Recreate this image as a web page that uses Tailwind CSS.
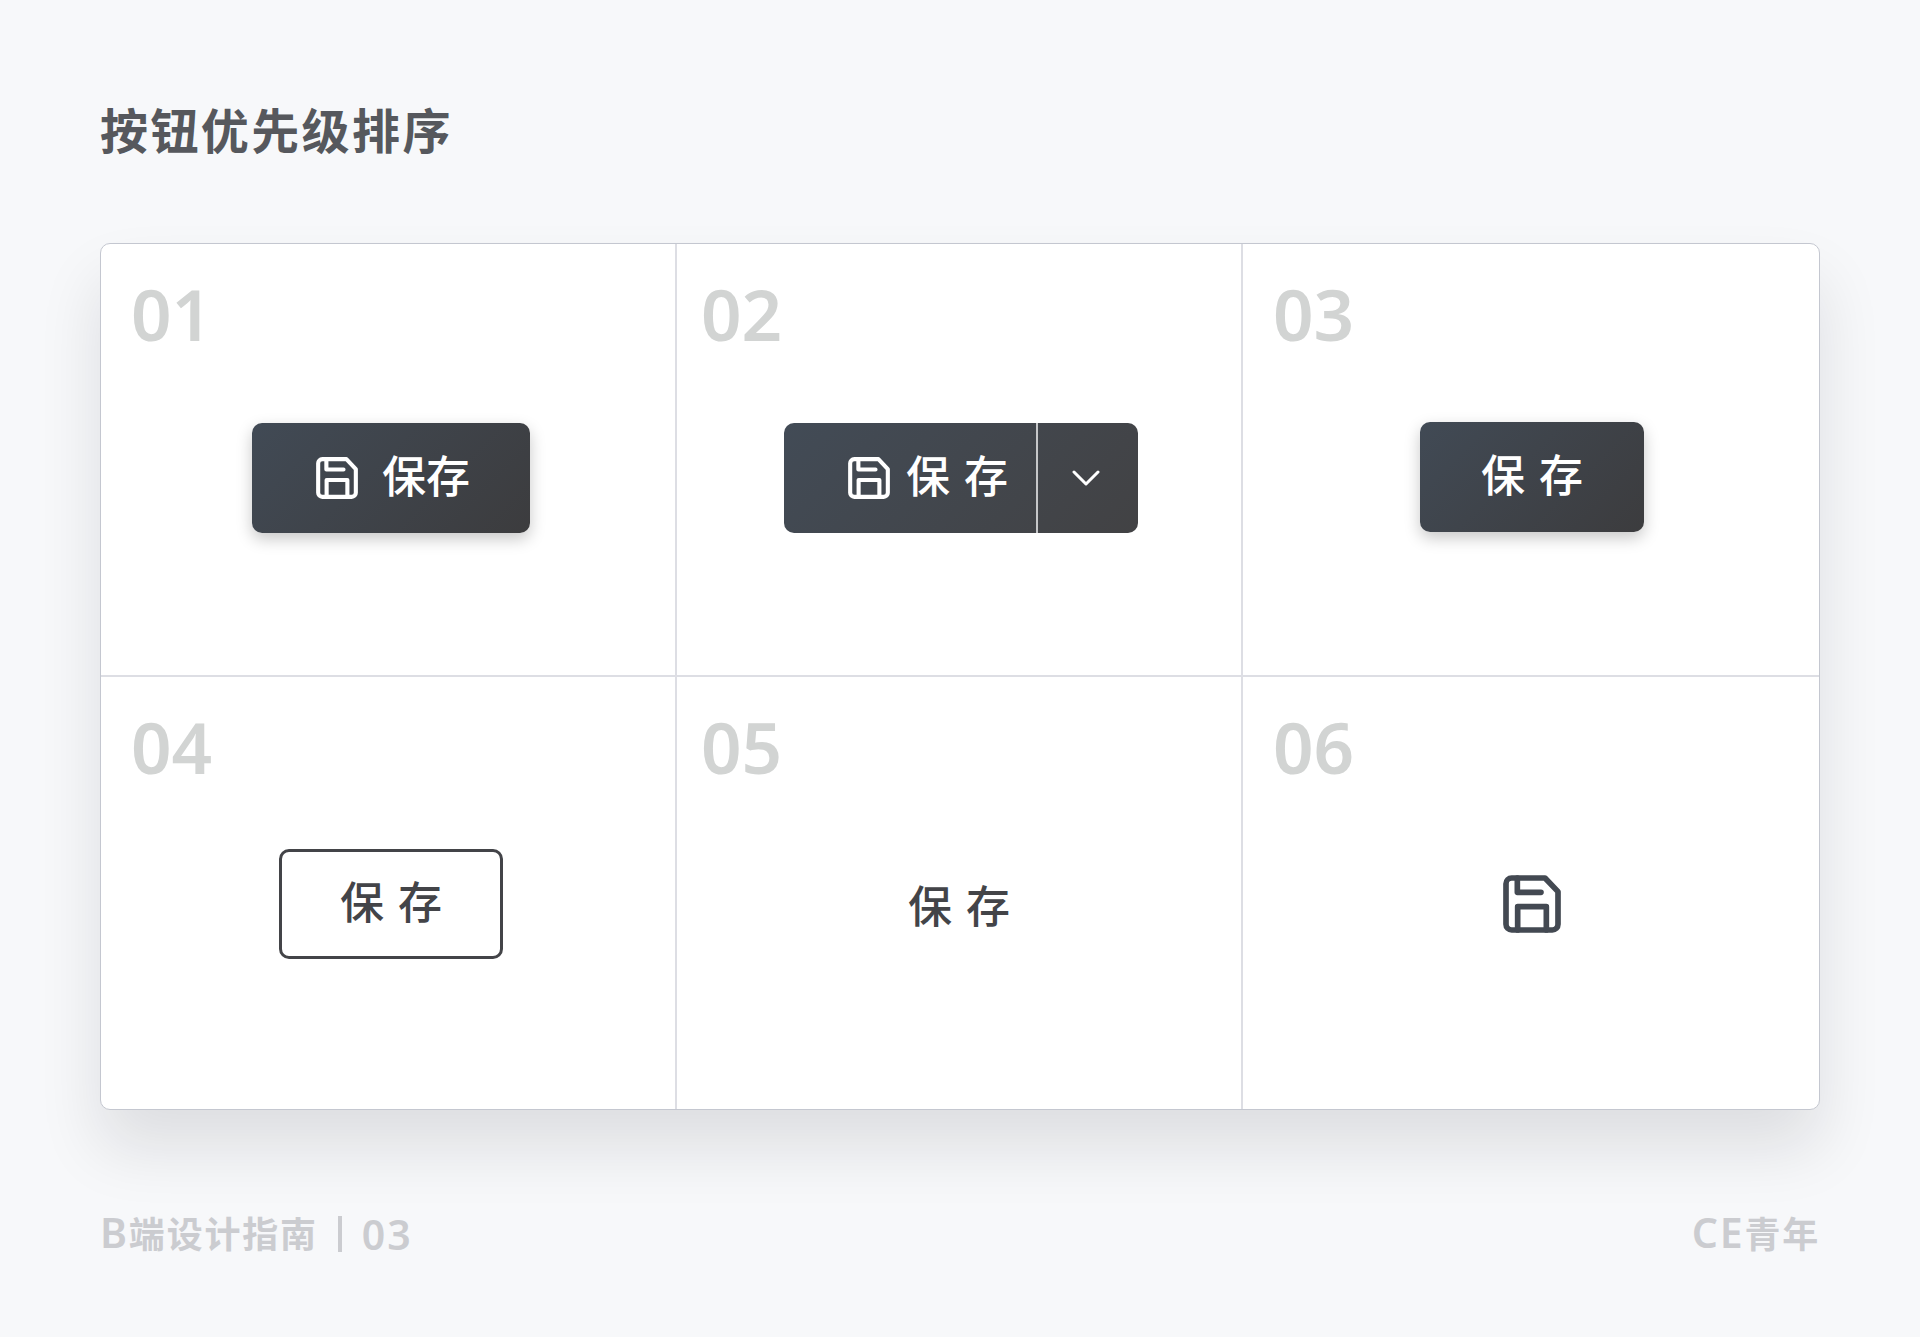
<!DOCTYPE html>
<html lang="zh-CN">
<head>
    <meta charset="UTF-8">
    <meta name="viewport" content="width=device-width, initial-scale=1.0">
    <title>按钮优先级排序</title>
    <script src="https://cdn.jsdelivr.net/npm/@tailwindcss/browser@4"></script>
</head>
<body class="min-h-screen bg-[#f7f8fa] px-[100px] pt-24 pb-16 font-['DejaVu_Sans','Noto_Sans_CJK_SC',sans-serif]">
    <svg class="hidden">
        <symbol id="icon-save" viewBox="0 0 174 174" fill="none" stroke="currentColor" stroke-width="17" stroke-linecap="round" stroke-linejoin="round">
            <path d="M26 9H126L165 50V148a17 17 0 0 1-17 17H26a17 17 0 0 1-17-17V26a17 17 0 0 1 17-17z" />
            <path d="M43 9V52H114" />
            <path d="M44 165V95H130V165" />
        </symbol>
    </svg>

    <h1 class="text-5xl leading-[72px] font-bold tracking-wider text-[#56585d]">按钮优先级排序</h1>

    <main class="mt-[75px] grid grid-cols-[576fr_566fr_576fr] rounded-[10px] border border-[#c4c7d0] bg-white shadow-[0_38px_64px_rgba(20,20,30,0.11)]">
        <section class="flex h-[433px] flex-col border-r-2 border-b-2 border-[#dddee4] pt-8">
            <h2 class="pl-[30px] font-['Noto_Sans'] text-[71px] leading-[76px] font-semibold text-[#d2d4d3]">01</h2>
            <div class="mt-[71px] flex h-[110px] items-center justify-center pl-1.5">
                <button type="button" class="flex h-[110px] items-center gap-6 rounded-[10px] bg-linear-135 from-[#414a55] to-[#3c3c3e] pr-15 pl-16 text-[44px] font-medium text-white shadow-[0_6px_16px_rgba(0,0,0,0.22)]">
                    <svg class="size-[42px]"><use href="#icon-save" /></svg>
                    <span>保存</span>
                </button>
            </div>
        </section>

        <section class="flex h-[433px] flex-col border-r-2 border-b-2 border-[#dddee4] pt-8">
            <h2 class="pl-6 font-['Noto_Sans'] text-[71px] leading-[76px] font-semibold text-[#d2d4d3]">02</h2>
            <div class="mt-[71px] flex h-[110px] items-center justify-center pl-1">
                <div class="flex h-[110px] overflow-hidden rounded-[10px] bg-linear-135 from-[#424b56] to-[#424244] text-white">
                    <button type="button" class="flex items-center gap-4 border-r-2 border-[#c6c7c9] pr-7 pl-16 text-[44px] font-medium">
                        <svg class="size-[42px]"><use href="#icon-save" /></svg>
                        <span>保 存</span>
                    </button>
                    <button type="button" aria-label="更多" class="flex w-[100px] items-center justify-center pr-1">
                        <svg class="h-4 w-7" viewBox="0 0 28 16" fill="none" stroke="currentColor" stroke-width="3" stroke-linecap="round" stroke-linejoin="round">
                            <path d="M2 2L14 14L26 2" />
                        </svg>
                    </button>
                </div>
            </div>
        </section>

        <section class="flex h-[433px] flex-col border-b-2 border-[#dddee4] pt-8">
            <h2 class="pl-[30px] font-['Noto_Sans'] text-[71px] leading-[76px] font-semibold text-[#d2d4d3]">03</h2>
            <div class="mt-[70px] flex h-[110px] items-center justify-center pl-0.5">
                <button type="button" class="h-[110px] w-56 rounded-[10px] bg-linear-135 from-[#414a55] to-[#3c3c3e] text-[44px] font-medium text-white shadow-[0_6px_16px_rgba(0,0,0,0.22)]">保 存</button>
            </div>
        </section>

        <section class="flex h-[432px] flex-col border-r-2 border-[#dddee4] pt-8">
            <h2 class="pl-[30px] font-['Noto_Sans'] text-[71px] leading-[76px] font-semibold text-[#d2d4d3]">04</h2>
            <div class="mt-16 flex h-[110px] items-center justify-center pl-1.5">
                <button type="button" class="h-[110px] w-56 rounded-[10px] border-3 border-[#434448] text-[44px] font-medium text-[#434448]">保 存</button>
            </div>
        </section>

        <section class="flex h-[432px] flex-col border-r-2 border-[#dddee4] pt-8">
            <h2 class="pl-6 font-['Noto_Sans'] text-[71px] leading-[76px] font-semibold text-[#d2d4d3]">05</h2>
            <div class="mt-[68px] flex h-[110px] items-center justify-center">
                <button type="button" class="h-[110px] w-56 text-[44px] font-medium text-[#434448]">保 存</button>
            </div>
        </section>

        <section class="flex h-[432px] flex-col pt-8">
            <h2 class="pl-[30px] font-['Noto_Sans'] text-[71px] leading-[76px] font-semibold text-[#d2d4d3]">06</h2>
            <div class="mt-16 flex h-[110px] items-center justify-center pl-0.5">
                <button type="button" aria-label="保存" class="text-[#434952]">
                    <svg class="size-[58px]"><use href="#icon-save" /></svg>
                </button>
            </div>
        </section>
    </main>

    <footer class="mt-24 flex items-center justify-between text-[#cbccd0]">
        <div class="flex items-center gap-5">
            <p class="text-4xl leading-[52px] font-bold tracking-wider"><span class="font-['Noto_Sans'] text-[41px] font-semibold">B</span>端设计指南</p>
            <span class="h-9 w-1 bg-current"></span>
            <p class="font-['Noto_Sans'] text-[41px] leading-[52px] font-semibold tracking-wider">03</p>
        </div>
        <p class="text-4xl leading-[52px] font-bold tracking-wider"><span class="font-['Noto_Sans'] text-[41px] font-semibold">CE</span>青年</p>
    </footer>
</body>
</html>
